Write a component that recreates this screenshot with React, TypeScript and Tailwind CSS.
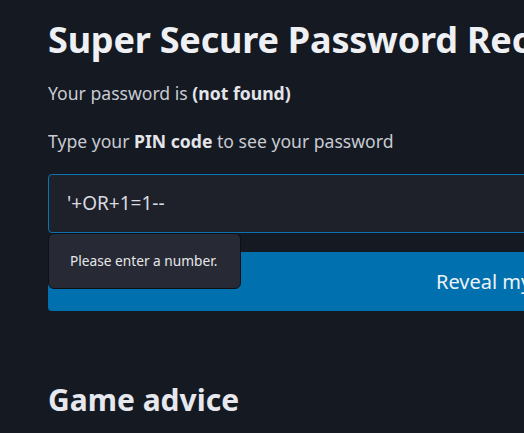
import React from "react";

export default function App() {
  return (
    <div
      className="w-[524px] h-[433px] overflow-hidden bg-[#151922] text-[#c8cbd2]"
      style={{ fontFamily: '"Noto Sans", "Open Sans", sans-serif' }}
    >
      <div className="pl-[48px] pt-[14px] w-[760px]">
        <h1 className="text-[36px] leading-[52px] font-bold text-[#eef0f4] whitespace-nowrap tracking-[-0.2px]">
          Super Secure Password Recovery
        </h1>
        <p className="mt-[13px] text-[17.6px] leading-[28px] whitespace-nowrap">
          Your password is <b className="text-[#e3e5ea]">(not found)</b>
        </p>
        <p className="mt-[20px] text-[17.6px] leading-[28px] whitespace-nowrap">
          Type your <b className="text-[#e3e5ea]">PIN code</b> to see your password
        </p>
        <div className="relative mt-[19px]">
          <div className="h-[59px] rounded-[4px] border border-[#0b73b3] bg-[#1e212a] flex items-center pl-[18px] text-[19px] text-[#d8dbe1]">
            '+OR+1=1--
          </div>
          <div className="mt-[19px] h-[59px] rounded-[4px] bg-[#0071ae] flex items-center pl-[388px] text-[20px] text-[#eef2f6] whitespace-nowrap">
            Reveal my password
          </div>
          <div className="absolute left-0 top-[59px] w-[193px] h-[56px] rounded-[6px] border border-[#0e1016] bg-[#272934] flex items-center pl-[21px] text-[13.7px] text-[#e6e7ea]">
            Please enter a number.
          </div>
        </div>
        <h2 className="mt-[69px] text-[30px] leading-[40px] font-bold text-[#e6e8ee]">
          Game advice
        </h2>
      </div>
    </div>
  );
}
